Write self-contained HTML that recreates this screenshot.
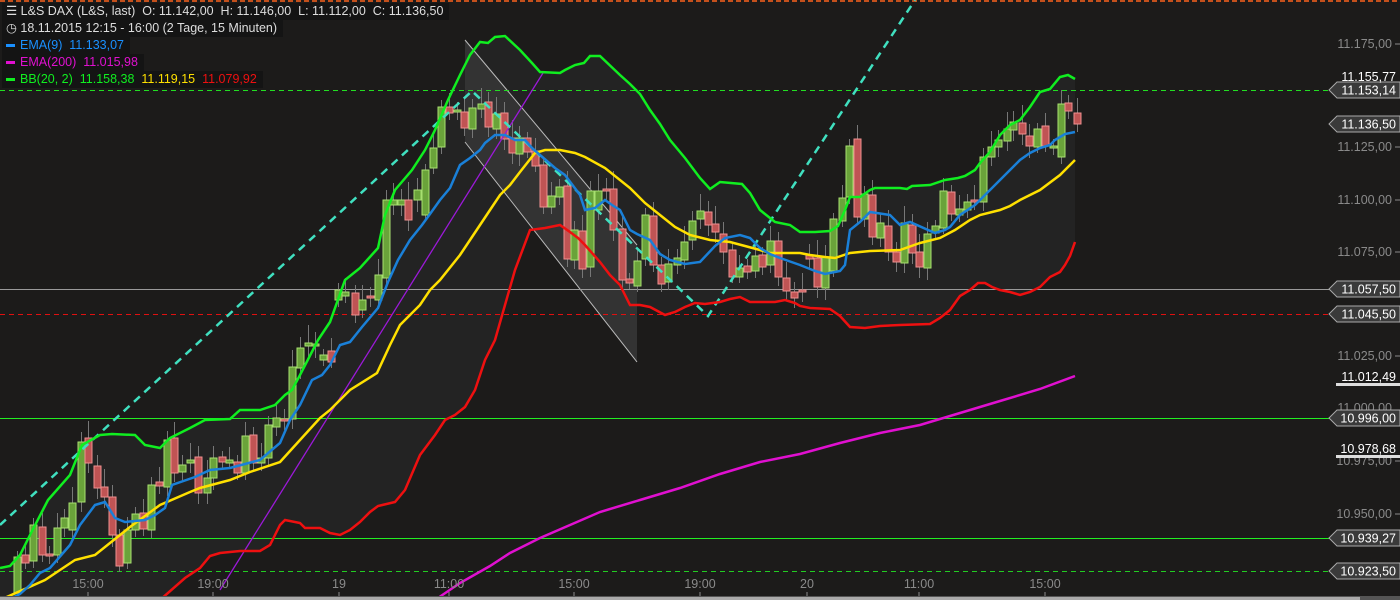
<!DOCTYPE html>
<html><head><meta charset="utf-8"><style>
html,body{margin:0;padding:0;background:#1c1b1a;overflow:hidden;width:1400px;height:600px}
#w{position:relative;width:1400px;height:600px;overflow:hidden;font-family:"Liberation Sans",sans-serif}
svg{position:absolute;left:0;top:0;overflow:hidden}
.lg{position:absolute;left:2px;height:17px;background:#141414;color:#ddd;font-size:12.5px;line-height:17px;padding:0 6px 0 4px;white-space:nowrap}
.ax{font-size:12.5px;fill:#8a8a8a}
.bx{font-size:12.5px;fill:#fff}
</style></head><body><div id="w">
<svg width="1400" height="600" viewBox="0 0 1400 600" id="s">
<rect width="1400" height="600" fill="#1c1b1a"/>
<line x1="0" y1="1" x2="1400" y2="1" stroke="#c4501c" stroke-width="2" stroke-dasharray="5,3"/>
<polygon id="band" fill="#232323"/>
<polygon points="465,40 637,245 637,362 465,142" fill="#333"/>
<line x1="465" y1="40" x2="637" y2="245" stroke="#bbb" stroke-width="1"/>
<line x1="465" y1="142" x2="637" y2="362" stroke="#bbb" stroke-width="1"/>
<line x1="0" y1="90.5" x2="1330" y2="90.5" stroke="#22dd22" stroke-dasharray="5,4"/>
<line x1="0" y1="289.5" x2="1330" y2="289.5" stroke="#9a9a9a"/>
<line x1="0" y1="314.5" x2="1330" y2="314.5" stroke="#e01010" stroke-dasharray="5,4"/>
<line x1="0" y1="418.5" x2="1330" y2="418.5" stroke="#22ee22"/>
<line x1="0" y1="538.5" x2="1330" y2="538.5" stroke="#22ee22"/>
<line x1="0" y1="571.5" x2="1330" y2="571.5" stroke="#22cc22" stroke-dasharray="5,4"/>
<g id="candles"></g>
<line x1="220" y1="590" x2="543" y2="73" stroke="#9b19d8" stroke-width="1.3"/>
<polyline fill="none" stroke="#40e0c0" stroke-width="2.5" stroke-dasharray="8,6" points="0,525 472,91 708,316 915,0"/>
<polyline id="mag" fill="none" stroke="#e010d0" stroke-width="2.5" points="435,600 460,583 490,566 510,553 540,538 570,525 600,512 640,500 680,488 720,474 760,462 800,454 840,443 880,433 920,425 960,413 1000,401 1040,389 1075,376"/>
<polyline id="red" fill="none" stroke="#ee1010" stroke-width="2.5" points="160,600 185,578 200,568 210,556 220,553 240,551 260,551 270,545 280,525 285,520 300,523 305,528 320,528 330,533 340,535 350,530 360,522 370,512 378,506 395,502 405,490 420,455 435,435 445,420 455,415 465,407 475,390 485,360 495,340 505,305 515,270 530,230 545,228 560,225 570,232 578,238 585,245 600,262 610,275 620,285 630,305 640,305 650,307 665,315 675,312 685,307 695,303 705,304 720,302 730,299 740,297 750,302 760,302 775,302 785,300 795,303 800,306 810,308 830,309 840,316 850,327 865,328 880,326 900,325 930,324 940,318 950,310 960,296 970,290 978,283 985,283 992,287 1000,290 1010,292 1020,295 1030,292 1040,287 1050,277 1060,272 1065,265 1070,256 1075,242"/>
<polyline id="yel" fill="none" stroke="#ffe000" stroke-width="2.5" points="0,600 45,580 60,570 75,560 95,555 130,527 160,505 190,492 200,488 230,480 250,472 280,462 300,440 320,418 330,410 350,390 377,373 390,345 400,325 420,305 430,290 440,280 460,255 470,240 480,225 490,210 500,195 510,185 520,172 535,153 545,150 560,150 575,153 585,157 605,168 630,188 645,203 660,215 675,227 690,235 710,240 730,242 745,246 760,250 770,253 800,253 810,255 825,257 835,258 850,253 860,252 870,251 900,250 920,243 940,238 955,230 970,220 980,215 1000,210 1010,206 1020,200 1040,190 1060,175 1075,160"/>
<polyline id="blu" fill="none" stroke="#1a80d8" stroke-width="2.5" points="8,600 20,594 30,585 40,573 50,568 70,545 80,525 95,505 105,502 115,518 125,522 145,520 155,515 165,508 172,485 195,477 210,470 230,468 245,464 260,460 280,443 290,420 300,405 312,380 322,375 330,365 340,345 350,342 362,327 378,308 388,282 398,260 410,240 422,225 430,214 440,200 450,188 460,165 470,158 480,150 485,143 495,135 505,135 515,140 525,140 532,148 540,155 555,168 565,175 580,195 585,210 595,208 605,200 612,205 620,210 630,230 637,234 650,240 660,254 670,260 685,264 700,262 715,246 725,238 740,235 750,238 760,248 770,254 780,258 800,265 815,271 825,274 840,271 845,265 850,230 860,222 870,212 890,215 900,225 910,222 935,233 945,230 950,227 960,215 975,205 980,200 1000,180 1020,160 1030,153 1040,148 1050,145 1055,140 1065,134 1075,132"/>
<polyline id="grn" fill="none" stroke="#10ee20" stroke-width="2.5" points="0,568 10,566 20,555 30,535 48,500 70,475 82,445 100,435 112,434 135,435 145,445 160,448 170,438 190,428 205,420 230,419 240,410 260,410 275,405 285,395 292,390 300,375 318,340 330,322 345,280 360,268 378,248 385,215 395,190 412,170 425,150 435,130 448,100 460,75 470,55 480,42 488,43 495,37 505,36 520,50 532,63 540,72 560,73 565,70 575,65 584,63 590,56 600,56 620,75 630,84 640,94 650,110 660,124 670,140 685,158 700,178 710,189 720,182 742,184 750,193 760,210 775,222 790,225 800,232 815,232 830,231 838,226 845,210 850,197 860,197 870,190 875,188 900,188 907,189 912,186 930,185 945,180 958,178 965,176 975,170 980,163 990,152 1000,135 1010,125 1020,120 1030,107 1040,92 1050,89 1060,77 1068,75 1075,79"/>
<g class="ax" text-anchor="end">
<text x="1392" y="48">11.175,00</text><text x="1392" y="151">11.125,00</text><text x="1392" y="204">11.100,00</text><text x="1392" y="256">11.075,00</text><text x="1392" y="360">11.025,00</text><text x="1392" y="412">11.000,00</text><text x="1392" y="465">10.975,00</text><text x="1392" y="518">10.950,00</text>
</g>
<g stroke="#8a8a8a"><line x1="1395" y1="44" x2="1400" y2="44"/><line x1="1395" y1="147" x2="1400" y2="147"/><line x1="1395" y1="200" x2="1400" y2="200"/><line x1="1395" y1="252" x2="1400" y2="252"/><line x1="1395" y1="356" x2="1400" y2="356"/><line x1="1395" y1="461" x2="1400" y2="461"/><line x1="1395" y1="514" x2="1400" y2="514"/></g>
<g id="boxes"></g>
<g class="bx" text-anchor="end"><text x="1396" y="81">11.155,77</text><text x="1396" y="381">11.012,49</text><text x="1396" y="453">10.978,68</text></g>
<rect x="1336" y="383" width="64" height="3" fill="#ddd"/><rect x="1336" y="455" width="64" height="3" fill="#ddd"/>
<g class="ax" text-anchor="middle">
<text x="88" y="588">15:00</text><text x="213" y="588">19:00</text><text x="339" y="588">19</text><text x="449" y="588">11:00</text><text x="574" y="588">15:00</text><text x="700" y="588">19:00</text><text x="807" y="588">20</text><text x="919" y="588">11:00</text><text x="1045" y="588">15:00</text>
</g>
<g stroke="#8a8a8a"><line x1="88" y1="592" x2="88" y2="598"/><line x1="213" y1="592" x2="213" y2="598"/><line x1="339" y1="592" x2="339" y2="598"/><line x1="449" y1="592" x2="449" y2="598"/><line x1="574" y1="592" x2="574" y2="598"/><line x1="700" y1="592" x2="700" y2="598"/><line x1="807" y1="592" x2="807" y2="598"/><line x1="919" y1="592" x2="919" y2="598"/><line x1="1045" y1="592" x2="1045" y2="598"/></g>
<rect x="0" y="596" width="1400" height="4" fill="#555"/><rect x="0" y="597" width="1360" height="3" fill="#aaa"/>
</svg>
<div class="lg" style="top:3px">&#9776; L&amp;S DAX (L&amp;S, last)&nbsp; O: 11.142,00&nbsp; H: 11.146,00&nbsp; L: 11.112,00&nbsp; C: 11.136,50</div>
<div class="lg" style="top:20px">&#9719; 18.11.2015 12:15 - 16:00 (2 Tage, 15 Minuten)</div>
<div class="lg" style="top:37px;color:#1a90ff"><span style="display:inline-block;width:9px;height:3px;background:#1a90ff;vertical-align:middle;margin-right:5px"></span>EMA(9)&nbsp; 11.133,07</div>
<div class="lg" style="top:54px;color:#e010d0"><span style="display:inline-block;width:9px;height:3px;background:#e010d0;vertical-align:middle;margin-right:5px"></span>EMA(200)&nbsp; 11.015,98</div>
<div class="lg" style="top:71px;color:#10ee20"><span style="display:inline-block;width:9px;height:3px;background:#10ee20;vertical-align:middle;margin-right:5px"></span>BB(20, 2)&nbsp; 11.158,38&nbsp; <span style="color:#ffe000">11.119,15</span>&nbsp; <span style="color:#ee1010">11.079,92</span></div>
</div>
<script>
var NS="http://www.w3.org/2000/svg";
function el(t,a,p){var e=document.createElementNS(NS,t);for(var k in a)e.setAttribute(k,a[k]);p.appendChild(e);return e;}
var g=document.getElementById('grn').getAttribute('points').trim();
var r=document.getElementById('red').getAttribute('points').trim().split(/\s+/).reverse().join(' ');
document.getElementById('band').setAttribute('points',g+' 1075,242 '+r+' 0,600');
var C=[[17,557,593,1],[25,555,563,0],[33,525,561,1],[42,527,555,0],[49,554,556,0],[57,528,555,1],[64,518,528,1],[72,503,530,1],[81,442,502,1],[88,438,463,0],[97,466,488,0],[104,487,497,0],[112,497,535,0],[119,535,566,0],[127,530,563,1],[135,514,530,1],[143,513,529,0],[151,485,530,1],[159,482,486,0],[167,440,487,1],[174,438,473,0],[182,465,472,1],[190,460,463,1],[198,457,493,0],[207,478,493,1],[213,458,478,1],[222,457,462,0],[229,460,463,1],[237,462,473,0],[245,436,473,1],[253,435,463,0],[261,458,463,1],[268,425,458,1],[276,418,427,1],[284,419,420,0],[292,367,419,1],[300,348,368,1],[308,343,346,1],[315,344,346,1],[323,355,360,1],[331,351,362,0],[338,290,300,1],[345,292,296,1],[355,293,315,0],[362,300,310,1],[370,296,298,0],[378,275,300,1],[386,200,278,1],[393,200,205,1],[401,200,205,1],[408,200,220,0],[417,190,200,1],[425,170,215,1],[433,148,168,1],[441,107,147,1],[449,107,113,0],[457,110,112,1],[464,112,128,0],[472,108,129,1],[481,104,109,1],[488,102,127,0],[496,114,129,1],[504,113,139,0],[512,138,153,0],[519,138,154,1],[527,138,152,0],[535,151,166,0],[543,165,207,0],[551,196,207,1],[559,187,197,1],[567,186,259,0],[574,230,260,1],[582,231,269,0],[590,191,267,1],[598,191,210,1],[606,189,190,0],[613,189,230,0],[622,229,280,0],[629,279,283,0],[637,261,286,1],[645,215,259,1],[653,216,265,0],[661,265,284,0],[668,264,282,1],[677,258,265,1],[684,242,260,1],[692,221,240,1],[700,211,219,1],[708,212,225,0],[715,224,232,0],[723,234,252,0],[732,250,277,0],[739,268,277,1],[747,266,272,0],[755,256,271,1],[762,255,267,0],[770,241,265,1],[778,241,277,0],[786,278,291,0],[794,292,298,0],[802,290,292,0],[809,255,259,0],[817,258,287,0],[825,257,288,1],[833,219,271,1],[842,198,221,1],[849,146,197,1],[857,139,217,0],[864,194,219,1],[872,195,237,0],[880,223,238,1],[888,226,252,0],[896,252,262,0],[904,223,263,1],[912,225,253,0],[919,252,267,0],[927,234,268,1],[935,226,233,1],[943,191,228,1],[951,192,214,0],[959,209,215,1],[967,202,210,1],[974,200,202,0],[983,157,202,1],[991,147,157,1],[998,140,147,1],[1007,129,141,1],[1013,122,130,1],[1022,123,134,0],[1029,136,146,0],[1037,129,147,1],[1045,126,146,0],[1053,146,148,1],[1061,104,157,1],[1068,103,111,0],[1077,113,124,0]];
var cg=document.getElementById('candles');
C.forEach(function(c,i){var x=c[0],t=c[1],b=c[2],h=Math.max(b-t,2);var w=(i*7)%13;
el('line',{x1:x+.5,x2:x+.5,y1:t-6-w,y2:Math.min(b+6+(w%7),594),stroke:'#777','stroke-width':1},cg);
el('rect',{x:x-3,y:t,width:7,height:h,fill:c[3]?'#6aa33a':'#c05454',stroke:c[3]?'#a8e070':'#f09090','stroke-width':1},cg);});
var B=[[90,'11.153,14'],[124,'11.136,50'],[289,'11.057,50'],[314,'11.045,50'],[418,'10.996,00'],[538,'10.939,27'],[571,'10.923,50']];
var bg=document.getElementById('boxes');
B.forEach(function(b){var y=b[0];
el('polygon',{points:'1329,'+y+' 1337,'+(y-8)+' 1400,'+(y-8)+' 1400,'+(y+8)+' 1337,'+(y+8),fill:'#3a3a3a',stroke:'#aaa','stroke-width':1},bg);
var t=el('text',{x:1396,y:y+4.5,'text-anchor':'end','font-size':12.5,fill:'#fff'},bg);t.textContent=b[1];});
</script>
</body></html>
